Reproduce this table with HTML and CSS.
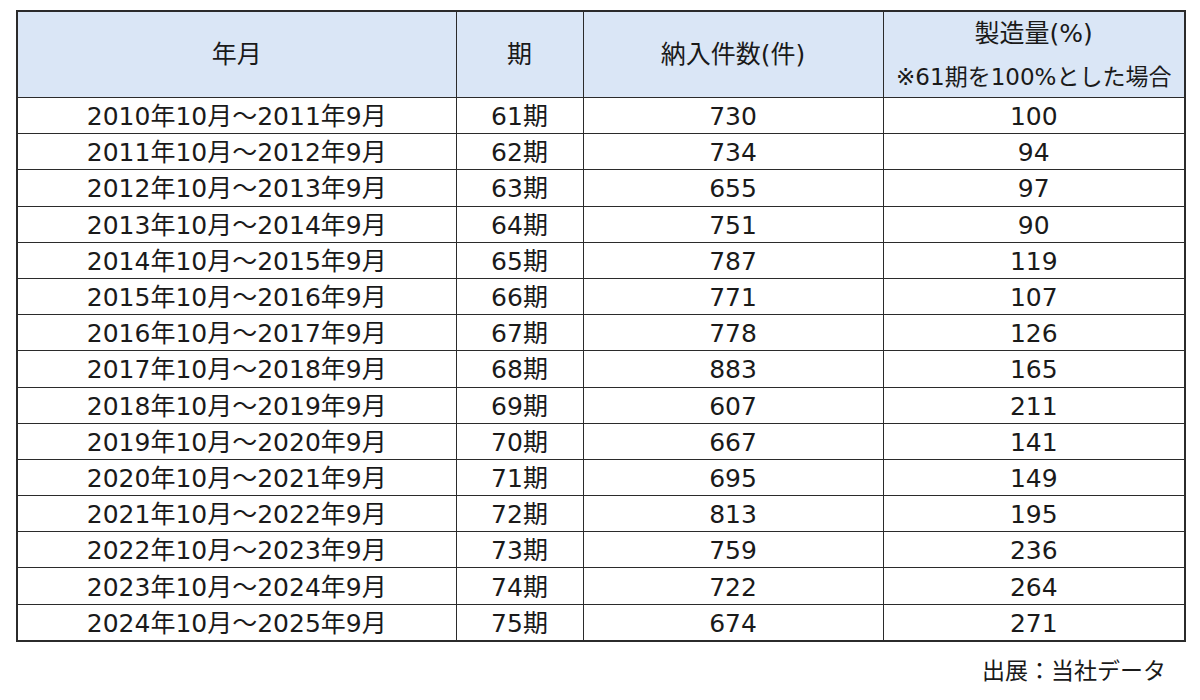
FILE: index.html
```html
<!DOCTYPE html>
<html lang="ja">
<head>
<meta charset="utf-8">
<link rel="stylesheet" href="styles.css">
</head>
<body>
<div class="page">
<table class="data">
<colgroup><col class="c1"><col class="c2"><col class="c3"><col class="c4"></colgroup>
<thead>
<tr><th>年月</th><th>期</th><th>納入件数(件)</th><th><div class="h-main">製造量(%)</div><div class="h-sub">※61期を100%とした場合</div></th></tr>
</thead>
<tbody>
<tr><td>2010年10月～2011年9月</td><td>61期</td><td>730</td><td>100</td></tr>
<tr><td>2011年10月～2012年9月</td><td>62期</td><td>734</td><td>94</td></tr>
<tr><td>2012年10月～2013年9月</td><td>63期</td><td>655</td><td>97</td></tr>
<tr><td>2013年10月～2014年9月</td><td>64期</td><td>751</td><td>90</td></tr>
<tr><td>2014年10月～2015年9月</td><td>65期</td><td>787</td><td>119</td></tr>
<tr><td>2015年10月～2016年9月</td><td>66期</td><td>771</td><td>107</td></tr>
<tr><td>2016年10月～2017年9月</td><td>67期</td><td>778</td><td>126</td></tr>
<tr><td>2017年10月～2018年9月</td><td>68期</td><td>883</td><td>165</td></tr>
<tr><td>2018年10月～2019年9月</td><td>69期</td><td>607</td><td>211</td></tr>
<tr><td>2019年10月～2020年9月</td><td>70期</td><td>667</td><td>141</td></tr>
<tr><td>2020年10月～2021年9月</td><td>71期</td><td>695</td><td>149</td></tr>
<tr><td>2021年10月～2022年9月</td><td>72期</td><td>813</td><td>195</td></tr>
<tr><td>2022年10月～2023年9月</td><td>73期</td><td>759</td><td>236</td></tr>
<tr><td>2023年10月～2024年9月</td><td>74期</td><td>722</td><td>264</td></tr>
<tr><td>2024年10月～2025年9月</td><td>75期</td><td>674</td><td>271</td></tr>
</tbody>
</table>
<p class="source">出展：当社データ</p>
</div>
</body>
</html>
```
FILE: styles.css
```css
html, body { margin: 0; padding: 0; background: #fff; }
body {
  font-family: "DejaVu Sans", "Noto Sans CJK JP", sans-serif;
  color: #1a1a1a;
}
.page {
  padding: 10px 16px 0 16px;
  width: 1168px;
}
.data {
  width: 1168px;
  border-collapse: collapse;
  table-layout: fixed;
  border: 2px solid #2b2b2b;
}
.c1 { width: 439px; }
.c2 { width: 127px; }
.c3 { width: 300px; }
.c4 { width: 302px; }
.data th, .data td {
  border: 1.5px solid #2b2b2b;
  text-align: center;
  padding: 0;
  font-weight: 400;
}
.data th {
  background: #dae6f6;
  height: 85px;
  font-size: 25px;
  line-height: 1.2;
}
.h-main { line-height: 40px; padding-top: 2px; }
.h-sub { line-height: 40px; font-size: 23px; margin-top: 3px; }
.data td {
  height: 33.2px;
  font-size: 25px;
  line-height: 33px;
  padding-top: 2px;
}
.source {
  margin: 10px 18px 0 0;
  text-align: right;
  font-size: 23px;
}
```
